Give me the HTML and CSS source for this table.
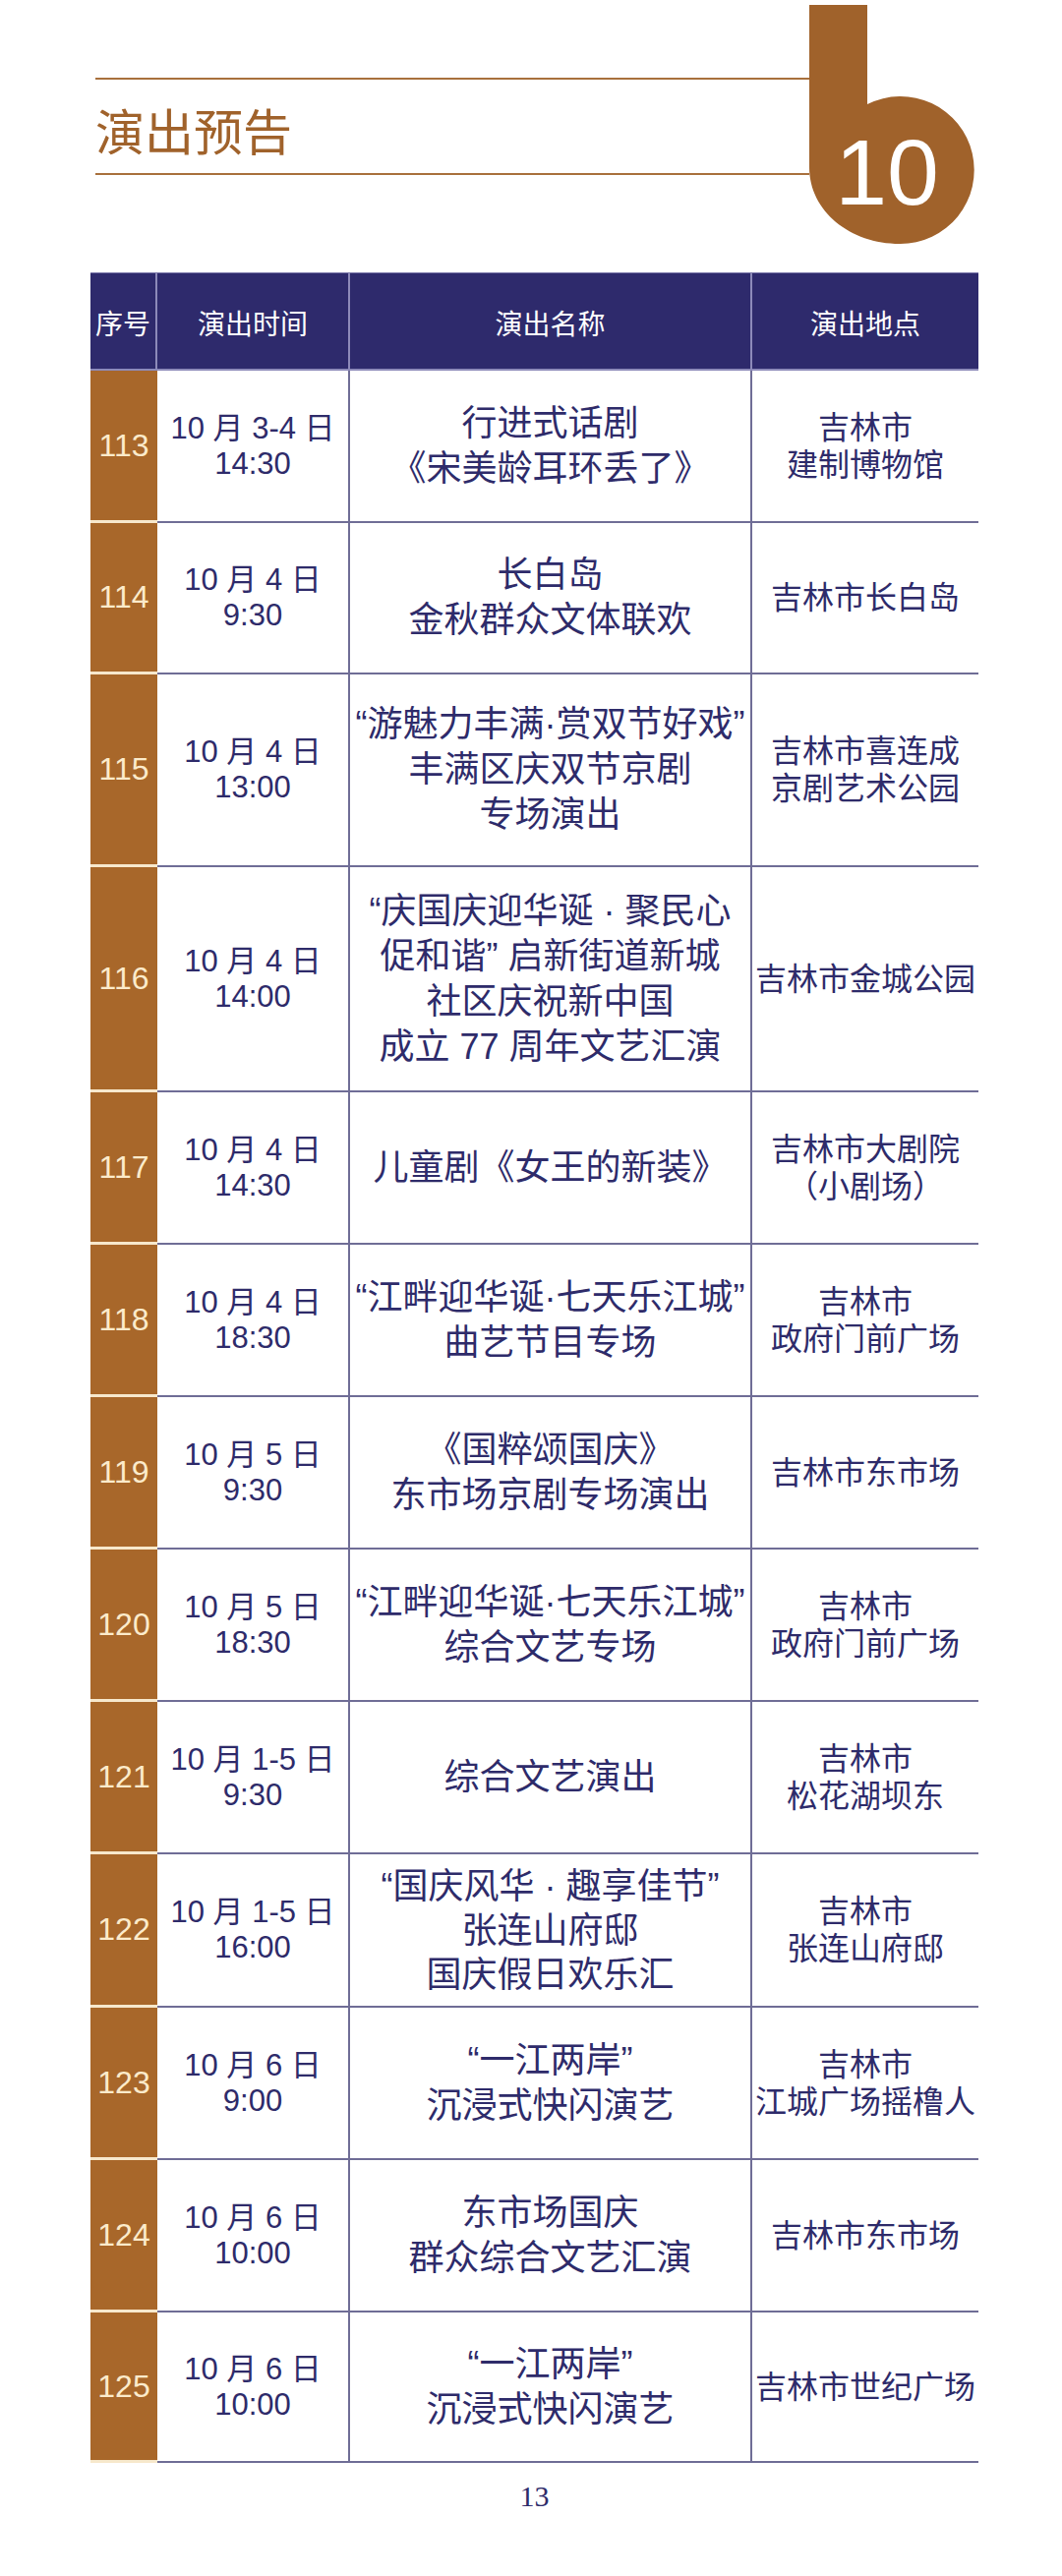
FILE: index.html
```html
<!DOCTYPE html>
<html lang="zh-CN">
<head>
<meta charset="utf-8">
<title>演出预告</title>
<link rel="stylesheet" href="styles.css">
</head>
<body>
<div class="page">
  <header class="top">
    <div class="title-block">
      <h1 class="title">演出预告</h1>
    </div>
    <svg class="tab" width="175" height="250" viewBox="0 0 175 250">
      <path d="M0,5 H59 V106 A75,75 0 1 1 92,248 C42,248 0,215 0,170 Z" fill="#a0622b"/>
      <text x="79" y="208" text-anchor="middle" class="tab-num">10</text>
    </svg>
  </header>

  <section class="table">
    <div class="thead">
      <div class="th">序号</div>
      <div class="th">演出时间</div>
      <div class="th">演出名称</div>
      <div class="th">演出地点</div>
    </div>

    <div class="row">
      <div class="idx">113</div>
      <div class="date">10 月 3-4 日<br>14:30</div>
      <div class="name">行进式话剧<br>《宋美龄耳环丢了》</div>
      <div class="loc">吉林市<br>建制博物馆</div>
    </div>
    <div class="row r154">
      <div class="idx">114</div>
      <div class="date">10 月 4 日<br>9:30</div>
      <div class="name">长白岛<br>金秋群众文体联欢</div>
      <div class="loc">吉林市长白岛</div>
    </div>
    <div class="row r196">
      <div class="idx">115</div>
      <div class="date">10 月 4 日<br>13:00</div>
      <div class="name">“游魅力丰满·赏双节好戏”<br>丰满区庆双节京剧<br>专场演出</div>
      <div class="loc">吉林市喜连成<br>京剧艺术公园</div>
    </div>
    <div class="row r229">
      <div class="idx">116</div>
      <div class="date">10 月 4 日<br>14:00</div>
      <div class="name">“庆国庆迎华诞 · 聚民心<br>促和谐” 启新街道新城<br>社区庆祝新中国<br>成立 77 周年文艺汇演</div>
      <div class="loc">吉林市金城公园</div>
    </div>
    <div class="row">
      <div class="idx">117</div>
      <div class="date">10 月 4 日<br>14:30</div>
      <div class="name">儿童剧《女王的新装》</div>
      <div class="loc">吉林市大剧院<br>（小剧场）</div>
    </div>
    <div class="row">
      <div class="idx">118</div>
      <div class="date">10 月 4 日<br>18:30</div>
      <div class="name">“江畔迎华诞·七天乐江城”<br>曲艺节目专场</div>
      <div class="loc">吉林市<br>政府门前广场</div>
    </div>
    <div class="row">
      <div class="idx">119</div>
      <div class="date">10 月 5 日<br>9:30</div>
      <div class="name">《国粹颂国庆》<br>东市场京剧专场演出</div>
      <div class="loc">吉林市东市场</div>
    </div>
    <div class="row">
      <div class="idx">120</div>
      <div class="date">10 月 5 日<br>18:30</div>
      <div class="name">“江畔迎华诞·七天乐江城”<br>综合文艺专场</div>
      <div class="loc">吉林市<br>政府门前广场</div>
    </div>
    <div class="row">
      <div class="idx">121</div>
      <div class="date">10 月 1-5 日<br>9:30</div>
      <div class="name">综合文艺演出</div>
      <div class="loc">吉林市<br>松花湖坝东</div>
    </div>
    <div class="row r156">
      <div class="idx">122</div>
      <div class="date">10 月 1-5 日<br>16:00</div>
      <div class="name tight">“国庆风华 · 趣享佳节”<br>张连山府邸<br>国庆假日欢乐汇</div>
      <div class="loc">吉林市<br>张连山府邸</div>
    </div>
    <div class="row">
      <div class="idx">123</div>
      <div class="date">10 月 6 日<br>9:00</div>
      <div class="name">“一江两岸”<br>沉浸式快闪演艺</div>
      <div class="loc">吉林市<br>江城广场摇橹人</div>
    </div>
    <div class="row">
      <div class="idx">124</div>
      <div class="date">10 月 6 日<br>10:00</div>
      <div class="name">东市场国庆<br>群众综合文艺汇演</div>
      <div class="loc">吉林市东市场</div>
    </div>
    <div class="row r153">
      <div class="idx">125</div>
      <div class="date">10 月 6 日<br>10:00</div>
      <div class="name">“一江两岸”<br>沉浸式快闪演艺</div>
      <div class="loc">吉林市世纪广场</div>
    </div>

    <div class="pageno">13</div>
  </section>
</div>
</body>
</html>
```

FILE: styles.css
```css
html, body {
  margin: 0;
  padding: 0;
  background: #ffffff;
}

body {
  font-family: "Liberation Sans", "Noto Sans CJK SC", sans-serif;
  color: #2e2b6a;
}

.page {
  width: 1080px;
  height: 2620px;
  overflow: hidden;
}

/* ---------- top title area ---------- */
.top {
  display: flex;
  align-items: flex-start;
  height: 250px;
  padding-left: 97px;
}

.title-block {
  width: 726px;
  height: 99px;
  margin-top: 79px;
  box-sizing: border-box;
  border-top: 2px solid #a8703c;
  border-bottom: 2px solid #a8703c;
  display: flex;
  align-items: center;
}

.title {
  margin: 0;
  font-family: "Noto Sans CJK SC", sans-serif;
  font-weight: 400;
  font-size: 50px;
  line-height: 1;
  color: #a0622b;
  padding-top: 4px;
}

.tab {
  display: block;
  flex: none;
}

.tab-num {
  font-family: "Liberation Sans", Arial, sans-serif;
  font-size: 95px;
  fill: #ffffff;
}

/* ---------- table ---------- */
.table {
  width: 903px;
  margin: 27px 0 0 92px;
}

.thead,
.row {
  display: grid;
  grid-template-columns: 68px 196px 409px 230px;
}

.thead {
  height: 100px;
  background: #2e2a6c;
  color: #ffffff;
  box-sizing: border-box;
  border-top: 1px solid #7c79ab;
  border-bottom: 2px solid #8d8ab9;
}

.th {
  display: flex;
  align-items: center;
  justify-content: center;
  font-family: "Noto Sans CJK SC", sans-serif;
  font-size: 28px;
  border-right: 2px solid #8d8ab9;
  padding-top: 2px;
}

.th:last-child {
  border-right: none;
}

.row {
  height: 155px;
}

.row.r153 { height: 153px; }
.row.r154 { height: 154px; }
.row.r156 { height: 156px; }
.row.r196 { height: 196px; }
.row.r229 { height: 229px; }

.row > div {
  display: flex;
  align-items: center;
  justify-content: center;
  text-align: center;
  box-sizing: border-box;
  border-bottom: 2px solid #6f6d96;
  white-space: nowrap;
}

.row > .idx {
  background: #a8672a;
  color: #fcebcb;
  font-size: 32px;
  border-bottom: 3px solid #f7e8cc;
}

.date {
  font-size: 31px;
  line-height: 36px;
  border-right: 2px solid #6f6d96;
}

.name {
  font-size: 36px;
  line-height: 46px;
  border-right: 2px solid #6f6d96;
}

.name.tight {
  line-height: 45px;
}

.loc {
  font-size: 32px;
  line-height: 38px;
}

.pageno {
  text-align: center;
  font-family: "Liberation Serif", "Times New Roman", serif;
  font-size: 30px;
  line-height: 36px;
  margin-top: 16px;
  color: #2e2b6a;
}
```
